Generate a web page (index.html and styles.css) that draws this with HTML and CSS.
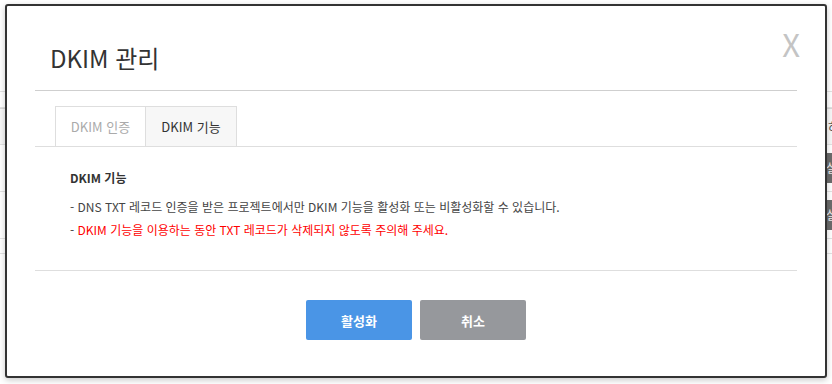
FILE: index.html
```html
<!DOCTYPE html>
<html lang="ko">
<head>
<meta charset="utf-8">
<title>DKIM 관리</title>
<link rel="stylesheet" href="styles.css">
</head>
<body>
<div class="page">
  <div class="bg-table">
    <div class="bg-row r1"></div>
    <div class="bg-row r2"></div>
    <div class="bg-row head"><span class="bg-text">상태 변경하</span></div>
    <div class="bg-row body"><span class="bg-btn">설정</span></div>
    <div class="bg-row body"><span class="bg-btn">설정</span></div>
    <div class="bg-row r3"></div>
  </div>

  <div class="modal">
    <button class="close" type="button">X</button>
    <div class="modal-head">
      <h1 class="modal-title">DKIM 관리</h1>
    </div>
    <div class="tabs">
      <div class="tab">DKIM 인증</div>
      <div class="tab active">DKIM 기능</div>
    </div>
    <div class="tab-body">
      <p class="sub-title">DKIM 기능</p>
      <p class="desc">- DNS TXT 레코드 인증을 받은 프로젝트에서만 DKIM 기능을 활성화 또는 비활성화할 수 있습니다.</p>
      <p class="desc">- <span class="warn">DKIM 기능을 이용하는 동안 TXT 레코드가 삭제되지 않도록 주의해 주세요.</span></p>
    </div>
    <div class="actions">
      <button class="btn btn-primary" type="button">활성화</button>
      <button class="btn btn-gray" type="button">취소</button>
    </div>
  </div>
</div>
</body>
</html>
```

FILE: styles.css
```css
* { box-sizing: border-box; }
html, body { margin: 0; padding: 0; }
body {
  background: #fff;
  font-family: "Noto Sans CJK KR", "Noto Sans", sans-serif;
  color: #333;
}
.page {
  position: relative;
  width: 832px;
  height: 384px;
  overflow: hidden;
}

/* background table behind the modal */
.bg-table {
  padding-top: 91px;
}
.bg-row {
  border-top: 1px solid #e2e2e2;
  display: flex;
  align-items: center;
  justify-content: flex-end;
}
.bg-row.r1 { height: 16px; }
.bg-row.r2 { height: 0; }
.bg-row.head {
  height: 36px;
  background: #f7f7f7;
  border-top: 1px solid #d8d8d8;
}
.bg-row.body { height: 47px; }
.bg-row.r3 { height: 16px; border-bottom: 1px solid #e2e2e2; }
.bg-text {
  font-size: 13px;
  color: #555;
  white-space: nowrap;
  margin-right: -8px;
}
.bg-btn {
  display: inline-block;
  height: 30px;
  line-height: 30px;
  padding: 0 8px;
  background: #6b6b6b;
  color: #eee;
  font-size: 12px;
  margin-right: -24px;
}

/* modal */
.modal {
  position: absolute;
  left: 5px;
  top: 4px;
  width: 822px;
  height: 374px;
  background: #fff;
  border: 2px solid #333;
  border-radius: 3px;
  box-shadow: 0 2px 6px rgba(0, 0, 0, 0.22);
  padding: 0 28px 36px;
}
.close {
  position: absolute;
  top: 22px;
  right: 25px;
  margin: 0;
  padding: 0;
  border: 0;
  background: none;
  font-family: "Noto Sans CJK KR", "Noto Sans", sans-serif;
  font-size: 31px;
  line-height: 1;
  color: #c4c4c4;
  font-weight: 400;
}
.modal-head {
  padding: 35px 15px 15px;
  border-bottom: 1px solid #cfcfcf;
}
.modal-title {
  margin: 0;
  font-size: 24px;
  line-height: 34px;
  font-weight: 400;
  color: #333;
}
.tabs {
  display: flex;
  margin-top: 15px;
  padding-left: 20px;
  border-bottom: 1px solid #dedede;
}
.tab {
  width: 91px;
  height: 40px;
  border: 1px solid #dedede;
  border-bottom: 0;
  font-size: 13px;
  line-height: 39px;
  text-align: center;
  color: #aaa;
  background: #fff;
}
.tab.active {
  border-left: 0;
  width: 91px;
  color: #333;
  background: #f7f7f7;
}
.tab-body {
  padding: 19px 35px 29px;
  border-bottom: 1px solid #dedede;
}
.tab-body p {
  margin: 0;
  font-size: 12px;
  line-height: 23px;
}
.sub-title {
  font-weight: 700;
  color: #333;
  margin-bottom: 6px !important;
}
.desc { color: #444; }
.warn { color: #ff0000; }

.actions {
  display: flex;
  justify-content: center;
  gap: 8px;
  margin-top: 29px;
}
.btn {
  width: 106px;
  height: 40px;
  border: 0;
  border-radius: 2px;
  font-family: "Noto Sans CJK KR", "Noto Sans", sans-serif;
  font-size: 13px;
  font-weight: 700;
  color: #fff;
  padding: 0;
}
.btn-primary { background: #4a95e6; }
.btn-gray { background: #96989c; }
```
